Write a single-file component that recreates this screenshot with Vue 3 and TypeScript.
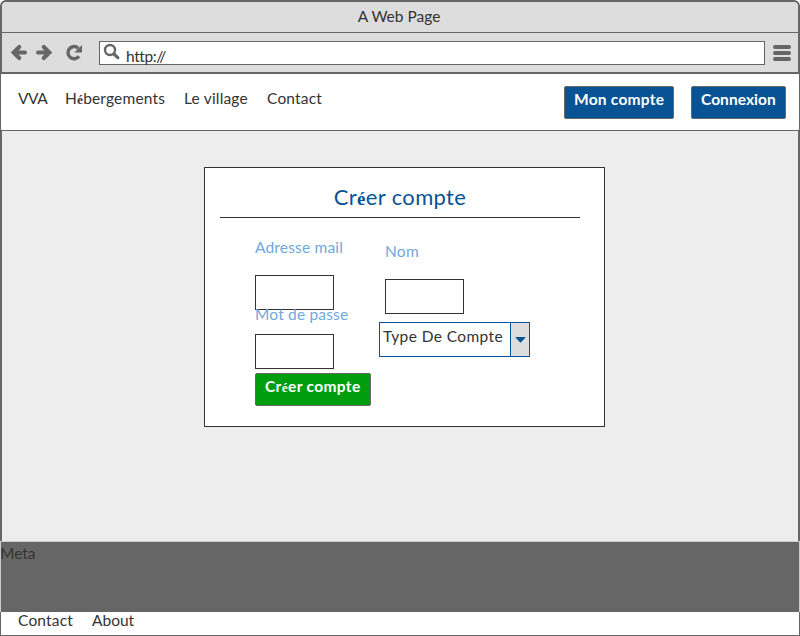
<script setup lang="ts">
import { ref } from 'vue'

const links: { label: string; cls: string }[] = [
  { label: 'VVA', cls: 'vva' },
  { label: 'Hébergements', cls: 'heb' },
  { label: 'Le village', cls: 'vil' },
  { label: 'Contact', cls: 'con' },
]
const address = ref('http://')
const mail = ref('')
const password = ref('')
const lastName = ref('')

// Accented letters are set smaller, as a separate run.
const runs = (label: string) => label.split(/(é)/).filter(Boolean)
</script>

<template>
  <div class="browser">
    <header class="titlebar"><span class="t-title">A Web Page</span></header>
    <div class="toolbar">
      <svg class="nav-icons" width="80" height="20" viewBox="0 0 80 20">
        <g fill="none" stroke="#666" stroke-width="4" stroke-linecap="round">
          <path d="M5 10.500H15" />
          <path d="M9.200 5L3.700 10.500L9.200 16" stroke-width="4.200" />
          <path d="M28 10.500H38" />
          <path d="M33.800 5L39.300 10.500L33.800 16" stroke-width="4.200" />
          <path d="M68.300 6.200A6.100 6.100 0 1 0 69 14.300" stroke-width="3.400" stroke-linecap="butt" />
        </g>
        <path d="M72 3V10.500H64.300Z" fill="#666" />
      </svg>
      <div class="address">
        <svg width="18" height="18" viewBox="0 0 18 18">
          <circle cx="7" cy="7" r="5" fill="none" stroke="#666" stroke-width="2.400" />
          <path d="M11 11L14.800 14.600" stroke="#666" stroke-width="3.200" stroke-linecap="round" />
        </svg>
        <span class="t-url">{{ address }}</span>
      </div>
      <div class="menu"><i /><i /><i /></div>
    </div>

    <nav class="navbar">
      <a v-for="l in links" :key="l.label" class="link" :class="l.cls">
        <span v-for="(r, i) in runs(l.label)" :key="i" :class="{ accent: r === 'é' }">{{ r }}</span>
      </a>
      <button class="btn account"><span class="t-acc">Mon compte</span></button>
      <button class="btn login"><span class="t-log">Connexion</span></button>
    </nav>

    <main class="content">
      <form class="card" @submit.prevent>
        <h1>
          <span class="t-head"><span v-for="(r, i) in runs('Créer compte')" :key="i" :class="{ accent: r === 'é' }">{{ r }}</span></span>
        </h1>
        <div class="columns">
          <div class="col">
            <label class="lbl"><span class="t-mail">Adresse mail</span></label>
            <input v-model="mail" class="field first" />
            <label class="lbl pass"><span class="t-pass">Mot de passe</span></label>
            <input v-model="password" type="password" class="field second" />
            <button class="btn create">
              <span class="t-create"><span v-for="(r, i) in runs('Créer compte')" :key="i" :class="{ accent: r === 'é' }">{{ r }}</span></span>
            </button>
          </div>
          <div class="col right">
            <label class="lbl"><span class="t-nom">Nom</span></label>
            <input v-model="lastName" class="field first" />
            <div class="select">
              <span class="value"><span class="t-type">Type De Compte</span></span>
              <span class="arrow"><svg width="11" height="6" viewBox="0 0 11 6"><path d="M1 .5H10L5.500 5.300Z" fill="#085394" stroke="#085394" stroke-linejoin="round" /></svg></span>
            </div>
          </div>
        </div>
      </form>
    </main>

    <section class="meta"><span class="t-meta">Meta</span></section>
    <footer class="footer"><a class="t-fc">Contact</a><a class="t-fa">About</a></footer>
  </div>
</template>

<style>
body { background: #fff; overflow: hidden; }
</style>

<style scoped>
* { box-sizing: border-box; }
.browser {
  width: 800px; height: 636px; display: flex; flex-direction: column;
  font: 15.5px/20px Lato, "Liberation Sans", sans-serif; color: #333; white-space: nowrap;
  letter-spacing: 0.18px;
}
.accent { font-family: "Liberation Serif", serif; font-size: 0.86em; line-height: 1; font-weight: bold; }
.titlebar {
  height: 33px; flex: none; background: #ddd; border: 2px solid #666; border-bottom: 1px solid #666;
  border-radius: 6px 6px 0 0; display: flex; justify-content: center; padding: 4px 2px 0 0;
}
.t-title { letter-spacing: 0; }
.toolbar {
  height: 41px; flex: none; background: #ddd; border: solid #666; border-width: 0 2px 2px;
  display: flex; align-items: flex-start; padding: 8px 7px 0 8px;
}
.nav-icons { flex: none; margin-top: 1px; margin-right: 9px; }
.address {
  width: 666px; height: 24px; background: #fff; border: 1px solid #666;
  display: flex; padding: 4px 0 0 3px;
}
.address svg { flex: none; margin-top: -3px; }
.t-url { margin: 0 0 0 5px; letter-spacing: -0.4px; }
.menu { width: 18px; margin: 4px 0 0 8px; display: flex; flex-direction: column; gap: 2px; }
.menu i { height: 4px; border-radius: 2px; background: #666; }
.navbar {
  height: 57px; flex: none; background: #fff; border: 1px solid #666; border-top: 0;
  display: flex; align-items: flex-start; padding: 12px 13px 0 17px;
}
.link { margin-top: 2px; flex: none; }
.vva { width: 47px; letter-spacing: -0.5px; }
.heb { width: 119px; }
.vil { width: 83px; }
.btn {
  font: bold 15.5px/20px Lato, "Liberation Sans", sans-serif; color: #fff; background: #085394;
  border: 1px solid #666; border-radius: 2px; height: 33px; padding: 2px 0 9px 9px; flex: none;
  display: flex; align-items: flex-start; justify-content: flex-start; text-align: left; white-space: nowrap;
}
.account { width: 110px; margin-left: auto; margin-right: 17px; letter-spacing: 0.25px; }
.login { width: 95px; letter-spacing: 0.05px; }
.content {
  height: 410px; flex: none; background: #ededed; border: solid #666; border-width: 0 2px;
  padding: 36px 0 0 202px;
}
.card { width: 401px; height: 260px; background: #fff; border: 1px solid #333; padding: 0 24px 0 15px; }
h1 {
  margin: 0; height: 50px; border-bottom: 1px solid #333; padding-top: 15px; text-align: center;
  font-size: 22px; line-height: 28px; font-weight: normal; color: #085394; letter-spacing: 0.35px;
}
.columns { display: flex; padding-left: 35px; }
.col { width: 130px; padding-top: 19px; display: flex; flex-direction: column; align-items: flex-start; }
.col.right { width: 160px; padding-top: 23px; }
.lbl { height: 20px; flex: none; color: #6fa8dc; }
.t-nom { letter-spacing: 0.25px; }
.field {
  width: 79px; height: 35px; border: 1px solid #333; background: #fff; margin: 0; padding: 4px;
  border-radius: 0; font: inherit; flex: none; outline: 0;
}
.first { margin-top: 18px; }
.pass { margin-top: -6px; }
.second { margin-top: 10px; }
.create { width: 116px; margin-top: 4px; background: #009e0f; letter-spacing: 0.35px; }
.select {
  width: 151px; height: 35px; margin: 8px 0 0 -6px; border: 1px solid #085394; display: flex; flex: none;
}
.value { flex: 1; padding: 3px 0 0 3px; letter-spacing: 0.4px; }
.arrow { width: 19px; background: #ddd; border-left: 1px solid #085394; display: flex; align-items: center; justify-content: center; }
.meta { height: 71px; flex: none; background: #666; border: 1px solid #ccc; border-bottom: 0; padding-top: 1px; }
.t-meta { margin-left: -1px; letter-spacing: 0; }
.footer { flex: 1; background: #fff; border: 1px solid #666; border-top: 0; padding: 0 0 0 17px; display: flex; }
.footer a { margin-top: -2px; }
.t-fc { width: 74px; }
.t-fa { letter-spacing: 0; }
</style>
